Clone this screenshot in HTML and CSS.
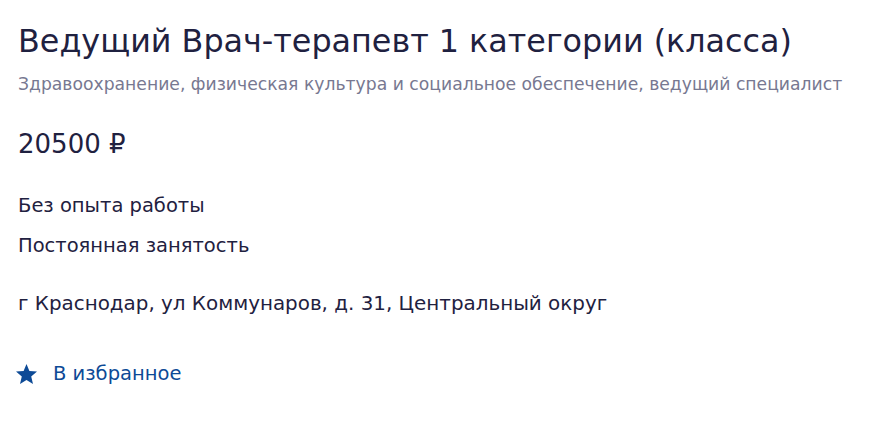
FILE: index.html
```html
<!DOCTYPE html>
<html lang="ru">
<head>
<meta charset="utf-8">
<link rel="stylesheet" href="styles.css">
</head>
<body>
<div class="vacancy">
  <h1 class="title">Ведущий Врач-терапевт 1 категории (класса)</h1>
  <div class="subtitle">Здравоохранение, физическая культура и социальное обеспечение, ведущий специалист</div>
  <div class="salary">20500 ₽</div>
  <div class="info">
    <div class="line">Без опыта работы</div>
    <div class="line">Постоянная занятость</div>
  </div>
  <div class="address">г Краснодар, ул Коммунаров, д. 31, Центральный округ</div>
  <a class="fav" href="#">
    <svg class="star" viewBox="0 0 21 20" width="21" height="20"><path d="M10.5 0L13.4 7L21 7.6L15.2 12.5L17 19.9L10.5 16L4 19.9L5.8 12.5L0 7.6L7.6 7Z" fill="currentColor"/></svg>
    <span>В избранное</span>
  </a>
</div>
</body>
</html>
```
FILE: styles.css
```css
html, body { margin: 0; padding: 0; background: #fff; }
body { font-family: "DejaVu Sans", Verdana, sans-serif; color: #1f2140; }
.vacancy { padding: 21px 18px; }
.title { margin: 0; font-size: 31.8px; font-weight: normal; line-height: 40px; color: #1f2140; }
.subtitle { font-size: 17.2px; color: #777891; line-height: 22px; margin-top: 12px; }
.salary { font-size: 26px; line-height: 32px; margin-top: 33px; }
.info { margin-top: 26px; }
.line { font-size: 19.5px; line-height: 40px; }
.address { font-size: 19.9px; line-height: 24px; margin-top: 26px; }
.fav { display: flex; align-items: center; gap: 16px; margin-top: 46px; color: #0d4a96; text-decoration: none; font-size: 19.5px; }
.star { display: block; margin-left: -2px; }
```
